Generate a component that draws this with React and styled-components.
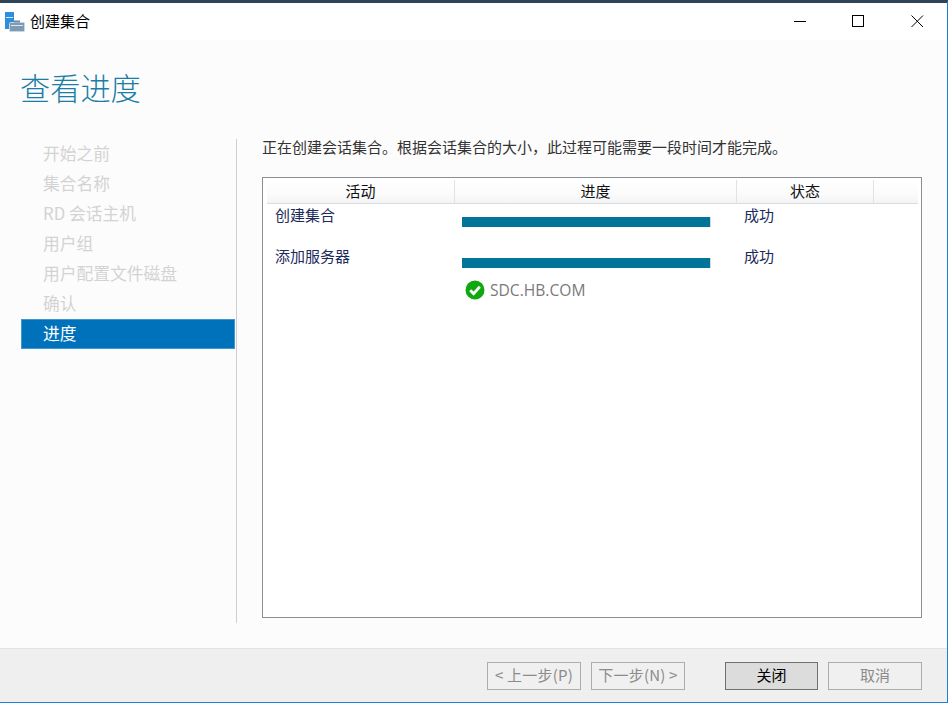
import React from "react";
import styled, { createGlobalStyle } from "styled-components";

const Global = createGlobalStyle`
  html, body { margin: 0; padding: 0; background: #fff; }
  * { box-sizing: border-box; }
`;
const FONT = `"Noto Sans CJK SC", "Open Sans", sans-serif`;

const Win = styled.div`
  width: 948px; height: 703px; display: flex; flex-direction: column; overflow: hidden;
  font-family: ${FONT}; font-size: 15px; background: #fcfcfc;
  border-top: 3px solid #2f4457; border-right: 1px solid #1f80cf; border-bottom: 1px solid #1f80cf;
`;
const TitleBar = styled.div`
  height: 37px; flex: none; background: #fff; display: flex; align-items: center; padding-left: 5px;
`;
const TitleText = styled.span`
  margin: 0 0 2px 5px; color: #000; line-height: 20px;
`;
const Controls = styled.div`
  margin-left: auto; display: flex; align-items: center; padding-right: 23px;
`;
const Ctl = styled.svg`
  display: block; width: 13px; height: 13px; margin-left: ${p => p.$gap}px;
`;
const Heading = styled.h1`
  margin: 0; padding: 27px 0 0 20px; height: 99px; flex: none;
  font-size: 30.2px; font-weight: 300; line-height: 40px; color: #1a7ea6;
`;
const Body = styled.div`
  flex: 1; display: flex; min-height: 0; padding-bottom: 25px;
`;
const SideWrap = styled.div`
  flex: none; margin-right: 25px; height: 484px; border-right: 1px solid #cfcfcf;
  width: 216px; margin-left: 21px;
`;
const SideItem = styled.div`
  height: 30px; padding-left: 22px; font-size: 16.75px; line-height: 28px; width: 214px;
  white-space: nowrap;
  color: ${p => (p.$active ? "#fff" : "#d3d3d3")};
  background: ${p => (p.$active ? "#0072bc" : "transparent")};
  ${p => p.$active && "box-shadow: inset 0 0 0 1px #3f97d0;"}
`;
const Main = styled.div`
  width: 660px; display: flex; flex-direction: column;
`;
const Intro = styled.p`
  margin: 0; height: 38px; line-height: 16px; color: #333; white-space: nowrap;
`;
const Box = styled.div`
  height: 441px; background: #fff; border: 1px solid #8a8f95;
  padding: 2px 3px 0 4px;
`;
const Head = styled.div`
  display: grid; grid-template-columns: 188px 282px 137px 43px; height: 24px;
  border-bottom: 1px solid #dcdcdc;
  background: linear-gradient(#fff 0%, #fbfbfb 60%, #f3f4f6 100%);
`;
const HeadCell = styled.div`
  text-align: center; line-height: 22px; color: #111;
  border-right: 1px solid #e2e2e2;
  &:last-child { border-right: 0; }
`;
const Row = styled.div`
  display: grid; grid-template-columns: 188px 282px 137px; height: ${p => p.$h}px;
`;
const Cell = styled.div`
  padding: 1px 0 0 ${p => p.$left}px; line-height: 20px; color: #1c2a5a;
`;
const BarCell = styled.div`
  padding: 13px 0 0 7px;
`;
const Track = styled.div`
  width: 249px; height: 10px; background: #d8d8d8;
`;
const Fill = styled.div`
  height: 100%; background: #007499;
`;
const Sub = styled.div`
  display: flex; align-items: center; height: 22px; margin-left: 198px; color: #7a7a7a;
`;
const SubText = styled.span`
  margin-left: 5px; font-family: "Open Sans", sans-serif; font-size: 15.6px;
`;
const Foot = styled.div`
  height: 54px; flex: none; background: #efefef; border-top: 1px solid #e3e3e3;
  display: flex; padding: 13px 0 0 487px;
`;
const Btn = styled.button`
  height: 28px; width: ${p => p.$w}px; margin-left: ${p => p.$gap}px; padding: 0 0 2px;
  font-family: ${FONT}; font-size: 15px; line-height: 24px; white-space: pre;
  letter-spacing: ${p => (p.$wide ? "0.2px" : "0")};
  border: 1px solid ${p => (p.$primary ? "#707070" : "#adadad")};
  background: ${p => (p.$primary ? "#dcdcdc" : "#f0f0f0")};
  color: ${p => (p.$primary ? "#000" : "#8b8b8b")};
`;

const AppIcon = () => (
  <svg width="20" height="20" viewBox="0 0 20 20" style={{ display: "block" }}>
    <rect x="0" y="0" width="9" height="17" fill="#2d8fdc" />
    <rect x="1" y="5" width="7" height="1" fill="#cfe6f8" />
    <rect x="4.5" y="10.5" width="15" height="9" rx="1" fill="#7f9ab3" stroke="#c9d6e2" />
    <rect x="9" y="8.5" width="6" height="2" fill="#6f8aa3" />
    <rect x="6" y="13" width="12" height="1" fill="#dfe7ee" />
  </svg>
);

const Check = () => (
  <svg width="20" height="20" viewBox="0 0 20 20" style={{ display: "block" }}>
    <circle cx="10" cy="10" r="9.5" fill="#0fa80f" />
    <path d="M5.2 10.2 L8.6 13.6 L14.8 6.8" fill="none" stroke="#fff" strokeWidth="2.8" />
  </svg>
);

const steps = ["开始之前", "集合名称", "RD 会话主机", "用户组", "用户配置文件磁盘", "确认", "进度"];

export default function App() {
  return (
    <>
      <Global />
      <Win>
        <TitleBar>
          <AppIcon />
          <TitleText>创建集合</TitleText>
          <Controls>
            <Ctl $gap={0} viewBox="0 0 13 13"><path d="M0 6.5H12" stroke="#000" fill="none" /></Ctl>
            <Ctl $gap={45} viewBox="0 0 13 13"><rect x="0.5" y="0.5" width="11" height="11" stroke="#000" fill="none" /></Ctl>
            <Ctl $gap={46} viewBox="0 0 13 13"><path d="M0.5 0.5L12 12M12 0.5L0.5 12" stroke="#000" fill="none" /></Ctl>
          </Controls>
        </TitleBar>
        <Heading>查看进度</Heading>
        <Body>
          <SideWrap>
            {steps.map((s, i) => (
              <SideItem key={s} $active={i === 6}>{s}</SideItem>
            ))}
          </SideWrap>
          <Main>
            <Intro>正在创建会话集合。根据会话集合的大小，此过程可能需要一段时间才能完成。</Intro>
            <Box>
              <Head>
                <HeadCell>活动</HeadCell>
                <HeadCell>进度</HeadCell>
                <HeadCell>状态</HeadCell>
                <HeadCell />
              </Head>
              <Row $h={41}>
                <Cell $left={8}>创建集合</Cell>
                <BarCell><Track><Fill style={{ width: "248px" }} /></Track></BarCell>
                <Cell $left={7}>成功</Cell>
              </Row>
              <Row $h={34}>
                <Cell $left={8}>添加服务器</Cell>
                <BarCell><Track><Fill style={{ width: "248px" }} /></Track></BarCell>
                <Cell $left={7}>成功</Cell>
              </Row>
              <Sub><Check /><SubText>SDC.HB.COM</SubText></Sub>
            </Box>
          </Main>
        </Body>
        <Foot>
          <Btn $w={94} $gap={0} $wide>{"< 上一步(P)"}</Btn>
          <Btn $w={94} $gap={10} $wide>{"下一步(N) >"}</Btn>
          <Btn $w={93} $gap={40} $primary>关闭</Btn>
          <Btn $w={94} $gap={10}>取消</Btn>
        </Foot>
      </Win>
    </>
  );
}
